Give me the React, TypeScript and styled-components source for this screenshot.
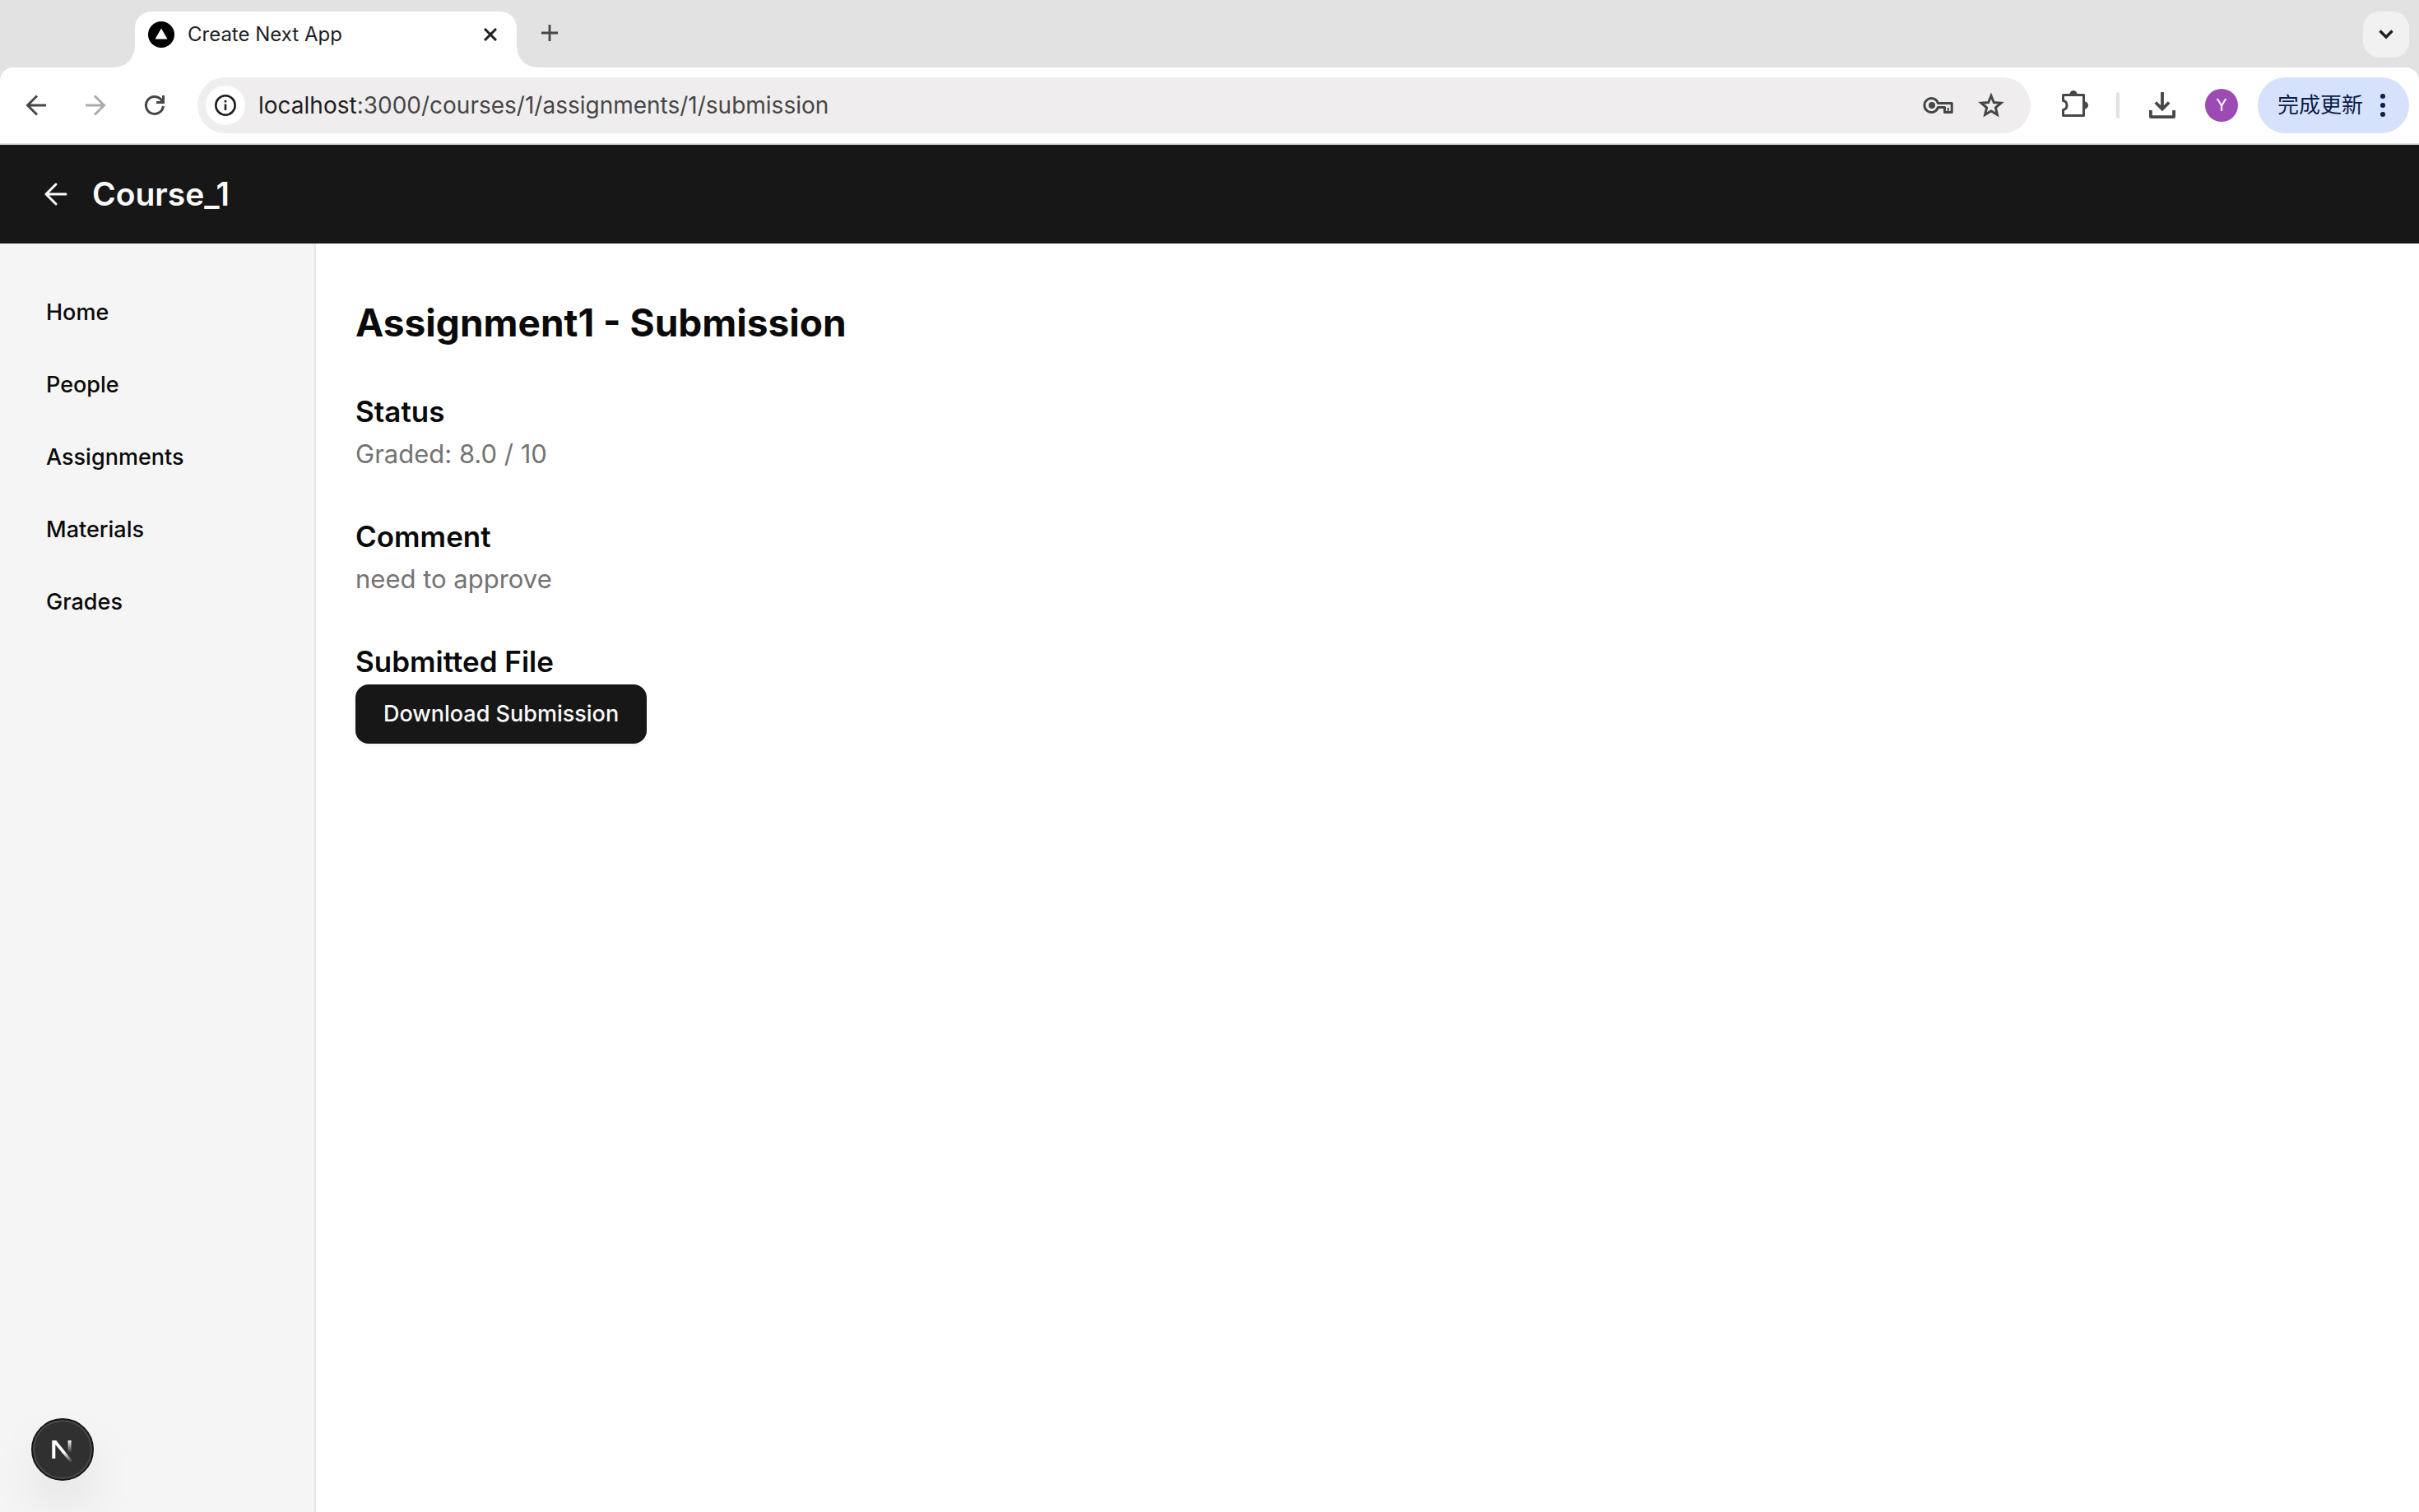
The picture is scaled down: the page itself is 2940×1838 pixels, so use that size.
import React from "react";
import styled, { createGlobalStyle } from "styled-components";

const GlobalStyle = createGlobalStyle`
  *, *::before, *::after { box-sizing: border-box; }
  html, body, #root { height: 100%; }
  body {
    margin: 0;
    background: #ffffff;
    color: #0a0a0a;
    font-family: Inter, "Liberation Sans", "Noto Sans CJK SC", sans-serif;
    -webkit-font-smoothing: antialiased;
  }
  button, input { font-family: inherit; }
`;

const Window = styled.div`
  display: flex;
  flex-direction: column;
  min-height: 100%;
`;

const TabStrip = styled.div`
  display: flex;
  align-items: flex-start;
  padding: 14px 12px 0 164px;
  background: #e2e2e2;
`;

const Tab = styled.div`
  position: relative;
  display: flex;
  align-items: center;
  width: 464px;
  height: 68px;
  padding: 0 16px 12px;
  border-radius: 20px 20px 0 0;
  background: #ffffff;

  &::before, &::after {
    content: "";
    position: absolute;
    bottom: 0;
    width: 24px;
    height: 24px;
  }
  &::before {
    right: 100%;
    background: radial-gradient(circle at 0 0, transparent 23px, #ffffff 24px);
  }
  &::after {
    left: 100%;
    background: radial-gradient(circle at 100% 0, transparent 23px, #ffffff 24px);
  }
`;

const TabTitle = styled.span`
  flex: 1;
  margin-left: 16px;
  font-size: 24px;
  line-height: 32px;
  color: #1f1f1f;
`;

const IconButton = styled.button<{ $size?: number }>`
  display: flex;
  flex: none;
  align-items: center;
  justify-content: center;
  width: ${(p) => p.$size ?? 32}px;
  height: ${(p) => p.$size ?? 32}px;
  padding: 0;
  border: 0;
  background: none;
  color: #474747;

  &:disabled { color: #ababab; }
`;

const NewTabButton = styled(IconButton)`
  margin: 10px 0 0 24px;
`;

const TabSearchButton = styled(IconButton)`
  margin-left: auto;
  border-radius: 20px;
  background: #f1f1f1;
  color: #1f1f1f;
`;

const ToolbarBack = styled.div`
  background: #e2e2e2;
`;

const Toolbar = styled.div`
  display: flex;
  align-items: center;
  height: 92px;
  padding: 0 12px 0 28px;
  border-radius: 16px 16px 0 0;
  background: #ffffff;
`;

const ToolbarEdge = styled.div`
  height: 2px;
  background: #e1e1e1;
`;

const NavButtons = styled.div`
  display: flex;
  gap: 40px;
  margin-right: 36px;
`;

const Omnibox = styled.div`
  display: flex;
  flex: 1;
  align-items: center;
  height: 68px;
  padding: 0 28px 0 10px;
  border-radius: 34px;
  background: #efedee;
`;

const SiteInfo = styled(IconButton)`
  border-radius: 50%;
  background: #ffffff;
  color: #1f1f1f;
`;

const Address = styled.div`
  flex: 1;
  margin-left: 16px;
  font-size: 28px;
  line-height: 36px;
  color: #474747;
`;

const Host = styled.span`
  color: #1f1f1f;
`;

const OmniboxActions = styled.div`
  display: flex;
  gap: 24px;
`;

const ToolbarActions = styled.div`
  display: flex;
  align-items: center;
  margin-left: 38px;
`;

const Separator = styled.div`
  width: 4px;
  height: 32px;
  margin: 0 36px 0 34px;
  border-radius: 2px;
  background: #e2e2e2;
`;

const Avatar = styled.button`
  width: 40px;
  height: 40px;
  margin: 0 24px 0 36px;
  padding: 0;
  border: 0;
  border-radius: 50%;
  background: #9c4bb5;
  color: #ffffff;
  font-size: 20px;
  line-height: 40px;
`;

const UpdateButton = styled.button`
  display: flex;
  align-items: center;
  justify-content: space-between;
  width: 184px;
  height: 68px;
  padding: 0 28px 0 24px;
  border: 0;
  border-radius: 34px;
  background: #d6e1fb;
  color: #0b1d49;
  font-size: 26px;
  line-height: 36px;
`;

const CourseHeader = styled.header`
  display: flex;
  align-items: center;
  gap: 24px;
  height: 120px;
  padding: 0 48px;
  background: #171717;
  color: #fafafa;
`;

const BackLink = styled.a`
  display: flex;
  color: inherit;
`;

const CourseTitle = styled.span`
  font-size: 39px;
  font-weight: 600;
  line-height: 56px;
`;

const Body = styled.div`
  display: flex;
  flex: 1;
`;

const Sidebar = styled.nav`
  display: flex;
  flex: none;
  flex-direction: column;
  gap: 16px;
  width: 384px;
  padding: 48px 24px;
  border-right: 2px solid #e5e5e5;
  background: #f5f5f5;
`;

const SidebarLink = styled.a`
  padding: 16px 32px;
  color: #0a0a0a;
  font-size: 27px;
  font-weight: 500;
  line-height: 40px;
  text-decoration: none;
`;

const Main = styled.main`
  display: flex;
  flex: 1;
  flex-direction: column;
  gap: 48px;
  padding: 64px 48px;
`;

const PageTitle = styled.h1`
  margin: 0;
  font-size: 46px;
  font-weight: 700;
  line-height: 64px;
`;

const SectionTitle = styled.h2`
  margin: 0;
  font-size: 35px;
  font-weight: 600;
  line-height: 56px;
`;

const SectionText = styled.p`
  margin: 0;
  color: #737373;
  font-size: 31px;
  line-height: 48px;
`;

const DownloadButton = styled.button`
  display: block;
  height: 72px;
  padding: 0 34px;
  border: 0;
  border-radius: 16px;
  background: #171717;
  box-shadow: 0 2px 4px rgba(0, 0, 0, 0.05);
  color: #fafafa;
  font-size: 27px;
  font-weight: 500;
  line-height: 40px;
`;

const DevBadge = styled.button`
  position: fixed;
  bottom: 38px;
  left: 38px;
  display: flex;
  align-items: center;
  justify-content: center;
  width: 76px;
  height: 76px;
  padding: 0;
  border: 2px solid #171717;
  border-radius: 50%;
  background: #303030;
  box-shadow: inset 0 0 0 2px #4a4a4a, 0 32px 64px -8px rgba(0, 0, 0, 0.12);
`;

const BackIcon = () => (
  <svg width="32" height="32" viewBox="0 0 32 32" fill="none" stroke="currentColor" strokeWidth="3">
    <path d="M28 16H6M17 4.500L5.500 16L17 27.500" />
  </svg>
);

const ForwardIcon = () => (
  <svg width="32" height="32" viewBox="0 0 32 32" fill="none" stroke="currentColor" strokeWidth="3">
    <path d="M4 16H26M15 4.500L26.500 16L15 27.500" />
  </svg>
);

const ReloadIcon = () => (
  <svg width="32" height="32" viewBox="0 0 32 32" fill="none" stroke="currentColor" strokeWidth="3">
    <path d="M26.400 17A10.500 10.500 0 1 1 23.500 8.700L26 11.500" />
    <path d="M26.500 4V12.500H18" />
  </svg>
);

const InfoIcon = () => (
  <svg width="28" height="28" viewBox="0 0 28 28" fill="none" stroke="currentColor" strokeWidth="2.600">
    <circle cx="14" cy="14" r="11.700" />
    <path d="M14 12.500V20M14 7.800V10.400" />
  </svg>
);

const KeyIcon = () => (
  <svg width="40" height="32" viewBox="0 0 40 32" fill="none" stroke="currentColor" strokeWidth="3">
    <path d="M19.500 13.500A8.500 8.500 0 1 0 19.500 18.500H27.500V24.500H36.200V13.500Z" strokeLinejoin="round" />
    <path d="M31.700 19V25" strokeWidth="2" />
    <circle cx="12" cy="16" r="4" fill="currentColor" stroke="none" />
  </svg>
);

const StarIcon = () => (
  <svg width="32" height="32" viewBox="0 0 32 32" fill="none" stroke="currentColor" strokeWidth="3">
    <path d="M16 4.500L19.300 12.500L28 13.200L21.400 18.900L23.400 27.400L16 22.900L8.600 27.400L10.600 18.900L4 13.200L12.700 12.500Z" />
  </svg>
);

const PuzzleIcon = () => (
  <svg width="32" height="36" viewBox="0 0 32 36" fill="none" stroke="currentColor" strokeWidth="3">
    <path d="M1.500 5.500H26.500V30.500H1.500V23.500A5.600 5.600 0 0 0 1.500 12.500Z" strokeLinejoin="round" />
    <path d="M9.500 4.500A4.500 4.500 0 0 1 18.500 4.500ZM27.500 13.500A4.500 4.500 0 0 1 27.500 22.500Z" fill="currentColor" stroke="none" />
  </svg>
);

const DownloadIcon = () => (
  <svg width="32" height="32" viewBox="0 0 32 32" fill="none" stroke="currentColor" strokeWidth="3.800">
    <path d="M16 0V20M7.800 12.500L16 20.500L24.200 12.500" />
    <path d="M1.900 22V30.100H30.100V22" strokeLinejoin="round" />
  </svg>
);

const PlusIcon = () => (
  <svg width="20" height="20" viewBox="0 0 20 20" stroke="currentColor" strokeWidth="2.800">
    <path d="M10 0V20M0 10H20" />
  </svg>
);

const CloseIcon = () => (
  <svg width="16" height="16" viewBox="0 0 16 16" stroke="#1f1f1f" strokeWidth="3">
    <path d="M1 1L15 15M15 1L1 15" />
  </svg>
);

const ChevronIcon = () => (
  <svg width="18" height="12" viewBox="0 0 18 12" fill="none" stroke="currentColor" strokeWidth="3.400">
    <path d="M1.500 1.500L9 9L16.500 1.500" />
  </svg>
);

const Favicon = () => (
  <svg width="32" height="32" viewBox="0 0 32 32">
    <circle cx="16" cy="16" r="16" fill="#000000" />
    <path d="M16 8.500L23.500 21.500H8.500Z" fill="#ffffff" />
  </svg>
);

const MoreDots = () => (
  <svg width="8" height="28" viewBox="0 0 8 28" fill="currentColor">
    <circle cx="4" cy="3" r="3" />
    <circle cx="4" cy="14" r="3" />
    <circle cx="4" cy="25" r="3" />
  </svg>
);

const CourseBackIcon = () => (
  <svg width="40" height="40" viewBox="0 0 40 40" fill="none" stroke="currentColor" strokeWidth="3" strokeLinecap="round" strokeLinejoin="round">
    <path d="M32 20H8M20 8L8 20L20 32" />
  </svg>
);

const FrameworkLogo = () => (
  <svg width="28" height="32" viewBox="0 0 28 32" fill="none">
    <defs>
      <linearGradient id="diagonalFade" x1="16" y1="19" x2="26" y2="31" gradientUnits="userSpaceOnUse">
        <stop stopColor="#ffffff" />
        <stop offset="1" stopColor="#ffffff" stopOpacity="0" />
      </linearGradient>
      <linearGradient id="stemFade" x1="22" y1="5" x2="22" y2="20" gradientUnits="userSpaceOnUse">
        <stop stopColor="#ffffff" />
        <stop offset="1" stopColor="#ffffff" stopOpacity="0" />
      </linearGradient>
    </defs>
    <path d="M1.300 27V5H6.300L26.500 30.300L23.500 32L5.300 10V27Z" fill="url(#diagonalFade)" />
    <path d="M20.600 5H24.600V20H20.600Z" fill="url(#stemFade)" />
  </svg>
);

const courseLinks = ["Home", "People", "Assignments", "Materials", "Grades"];

export default function App() {
  return (
    <Window>
      <GlobalStyle />
      <TabStrip>
        <Tab>
          <Favicon />
          <TabTitle>Create Next App</TabTitle>
          <IconButton aria-label="Close tab"><CloseIcon /></IconButton>
        </Tab>
        <NewTabButton aria-label="New tab"><PlusIcon /></NewTabButton>
        <TabSearchButton $size={56} aria-label="Search tabs"><ChevronIcon /></TabSearchButton>
      </TabStrip>
      <ToolbarBack>
        <Toolbar>
          <NavButtons>
            <IconButton aria-label="Back"><BackIcon /></IconButton>
            <IconButton aria-label="Forward" disabled><ForwardIcon /></IconButton>
            <IconButton aria-label="Reload"><ReloadIcon /></IconButton>
          </NavButtons>
          <Omnibox>
            <SiteInfo $size={48} aria-label="Site information"><InfoIcon /></SiteInfo>
            <Address><Host>localhost</Host>:3000/courses/1/assignments/1/submission</Address>
            <OmniboxActions>
              <IconButton $size={40} aria-label="Passwords"><KeyIcon /></IconButton>
              <IconButton $size={40} aria-label="Bookmark"><StarIcon /></IconButton>
            </OmniboxActions>
          </Omnibox>
          <ToolbarActions>
            <IconButton aria-label="Extensions"><PuzzleIcon /></IconButton>
            <Separator />
            <IconButton aria-label="Downloads"><DownloadIcon /></IconButton>
            <Avatar>Y</Avatar>
            <UpdateButton lang="zh-CN">完成更新<MoreDots /></UpdateButton>
          </ToolbarActions>
        </Toolbar>
        <ToolbarEdge />
      </ToolbarBack>
      <CourseHeader>
        <BackLink href="#courses" aria-label="Back to courses"><CourseBackIcon /></BackLink>
        <CourseTitle>Course_1</CourseTitle>
      </CourseHeader>
      <Body>
        <Sidebar>
          {courseLinks.map((label) => (
            <SidebarLink key={label} href={`#${label.toLowerCase()}`}>{label}</SidebarLink>
          ))}
        </Sidebar>
        <Main>
          <PageTitle>Assignment1 - Submission</PageTitle>
          <section>
            <SectionTitle>Status</SectionTitle>
            <SectionText>Graded: 8.0 / 10</SectionText>
          </section>
          <section>
            <SectionTitle>Comment</SectionTitle>
            <SectionText>need to approve</SectionText>
          </section>
          <section>
            <SectionTitle>Submitted File</SectionTitle>
            <DownloadButton>Download Submission</DownloadButton>
          </section>
        </Main>
      </Body>
      <DevBadge aria-label="Open developer tools"><FrameworkLogo /></DevBadge>
    </Window>
  );
}
